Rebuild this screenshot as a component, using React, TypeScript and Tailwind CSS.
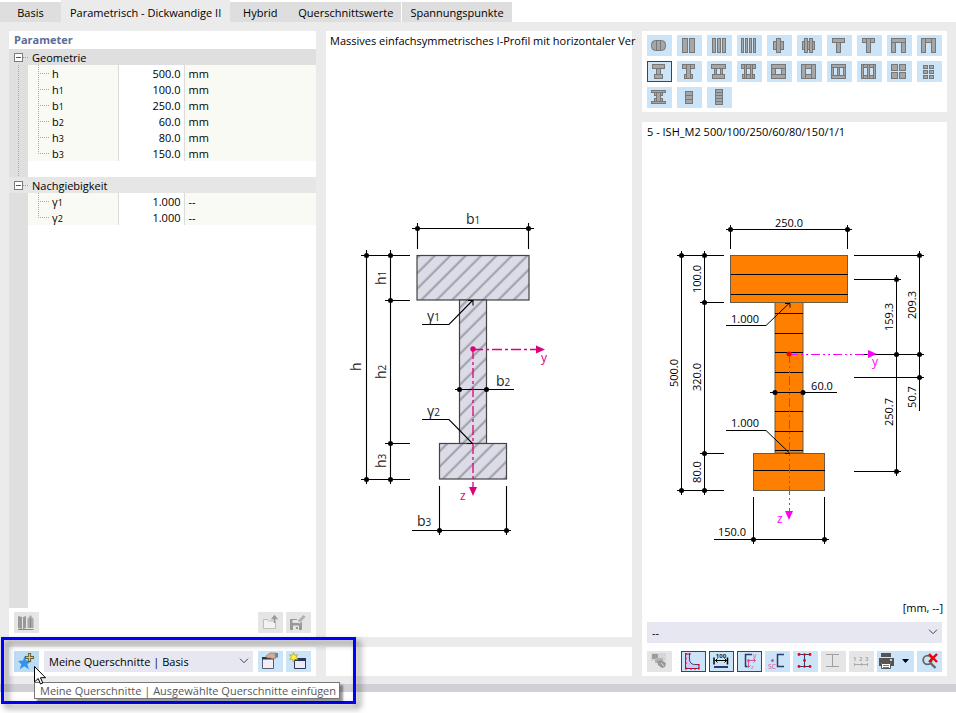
import { useState } from "react";
import type { ReactNode } from "react";
import clsx from "clsx";

type Box = [number, number, number, number];
type Param = { name: string; sub?: string; value: string; unit: string };

const tabs = ["Basis", "Parametrisch - Dickwandige II", "Hybrid", "Querschnittswerte", "Spannungspunkte"];

const groups: { title: string; tone: string; rows: Param[] }[] = [
  {
    title: "Geometrie",
    tone: "bg-[#dfdfdf]",
    rows: [
      { name: "h", value: "500.0", unit: "mm" },
      { name: "h", sub: "1", value: "100.0", unit: "mm" },
      { name: "b", sub: "1", value: "250.0", unit: "mm" },
      { name: "b", sub: "2", value: "60.0", unit: "mm" },
      { name: "h", sub: "3", value: "80.0", unit: "mm" },
      { name: "b", sub: "3", value: "150.0", unit: "mm" },
    ],
  },
  {
    title: "Nachgiebigkeit",
    tone: "bg-[#e6e6e6]",
    rows: [
      { name: "γ", sub: "1", value: "1.000", unit: "--" },
      { name: "γ", sub: "2", value: "1.000", unit: "--" },
    ],
  },
];

// Section pictograms as boxes: x, y, width, height (later boxes lie on top)
const shapes: { label: string; boxes: Box[] }[] = [
  { label: "Rundprofil", boxes: [] },
  { label: "Zwei Lamellen", boxes: [[5, 3, 6, 15], [12, 3, 6, 15]] },
  { label: "Drei Lamellen", boxes: [[5, 3, 4, 15], [10, 3, 4, 15], [15, 3, 4, 15]] },
  { label: "Vier Lamellen", boxes: [[4, 3, 3, 15], [8, 3, 3, 15], [12, 3, 3, 15], [16, 3, 3, 15]] },
  { label: "Kreuzprofil", boxes: [[6, 6, 4, 9], [13, 6, 4, 9], [9, 3, 5, 15]] },
  { label: "Doppelkreuz", boxes: [[5, 6, 13, 9], [7, 3, 4, 15], [12, 3, 4, 15]] },
  { label: "T-Profil", boxes: [[9, 7, 5, 11], [5, 3, 13, 5]] },
  { label: "T-Profil mit Steg", boxes: [[5, 3, 13, 5], [9, 3, 5, 15]] },
  { label: "U-Profil", boxes: [[4, 7, 5, 11], [14, 7, 5, 11], [4, 3, 15, 5]] },
  { label: "U-Profil mit Stegen", boxes: [[8, 3, 7, 5], [4, 3, 5, 15], [14, 3, 5, 15]] },
  { label: "I-Profil horizontal", boxes: [[9, 7, 5, 7], [5, 3, 13, 5], [7, 13, 9, 5]] },
  { label: "I-Profil vertikal", boxes: [[5, 3, 13, 5], [7, 13, 9, 5], [9, 3, 5, 15]] },
  { label: "Doppelsteg", boxes: [[7, 7, 3, 7], [13, 7, 3, 7], [4, 3, 15, 5], [5, 13, 13, 5]] },
  { label: "Doppelsteg vertikal", boxes: [[4, 3, 15, 5], [5, 13, 13, 5], [7, 3, 3, 15], [13, 3, 3, 15]] },
  { label: "Kasten horizontal", boxes: [[4, 7, 5, 7], [14, 7, 5, 7], [4, 3, 15, 5], [4, 13, 15, 5]] },
  { label: "Kasten vertikal", boxes: [[8, 3, 7, 5], [8, 13, 7, 5], [4, 3, 5, 15], [14, 3, 5, 15]] },
  { label: "Zweizelliger Kasten", boxes: [[4, 5, 3, 11], [10, 5, 3, 11], [16, 5, 3, 11], [4, 3, 15, 4], [4, 14, 15, 4]] },
  { label: "Zweizelliger Kasten vertikal", boxes: [[5, 3, 13, 4], [5, 14, 13, 4], [4, 3, 3, 15], [10, 3, 3, 15], [16, 3, 3, 15]] },
  { label: "Vier Teile", boxes: [[4, 3, 7, 7], [12, 3, 7, 7], [4, 11, 7, 7], [12, 11, 7, 7]] },
  { label: "Sechs Teile", boxes: [[6, 4, 5, 4], [12, 4, 5, 4], [6, 9, 5, 4], [12, 9, 5, 4], [6, 14, 5, 4], [12, 14, 5, 4]] },
  { label: "I-Profil mit Platten", boxes: [[4, 3, 15, 3], [4, 14, 15, 3], [7, 5, 9, 4], [7, 11, 9, 4], [9, 5, 5, 10]] },
  { label: "Drei Lagen", boxes: [[8, 4, 8, 5], [8, 8, 8, 5], [8, 12, 8, 5]] },
  { label: "Fünf Lagen", boxes: [[8, 2, 8, 4], [8, 5, 8, 4], [8, 8, 8, 4], [8, 11, 8, 4], [8, 14, 8, 4]] },
];

const ShapeIcon = ({ boxes }: { boxes: Box[] }) => (
  <svg viewBox="0 0 25 21" className="h-[21px] w-[25px]" fill="#a6a6a6" stroke="#777777">
    {boxes.length === 0 && (
      <>
        <rect x="4.5" y="5.5" width="14" height="10" rx="4" />
        <path d="M9.5 5.5v10M13.5 5.5v10" />
      </>
    )}
    {boxes.map(([x, y, w, h], i) => (
      <rect key={i} x={x + 0.5} y={y + 0.5} width={w - 1} height={h - 1} />
    ))}
  </svg>
);

type ToolButtonProps = {
  label: string;
  variant?: "normal" | "active" | "disabled" | "hover";
  wide?: boolean;
  children: ReactNode;
};

const ToolButton = ({ label, variant = "normal", wide, children }: ToolButtonProps) => (
  <button
    type="button"
    aria-label={label}
    disabled={variant === "disabled"}
    className={clsx(
      "h-[21px] shrink-0",
      wide ? "w-[37px]" : "w-[25px]",
      variant === "normal" && "bg-[#cce4f7]",
      variant === "active" && "bg-[#cce4f7] outline-1 -outline-offset-1 outline-[#00559b]",
      variant === "disabled" && "bg-[#e5e5e5]",
      variant === "hover" && "bg-[#bcdcf4]"
    )}
  >
    <svg viewBox={wide ? "0 0 37 21" : "0 0 25 21"} className="h-[21px] w-full" fill="none">
      {children}
    </svg>
  </button>
);

const Dropdown = ({ label, value }: { label: string; value: string }) => (
  <div className="relative h-[21px] min-w-0 flex-1">
    <select aria-label={label} className="block h-full w-full appearance-none bg-[#e7e7f2] px-[5px] pr-5 leading-4">
      <option>{value}</option>
    </select>
    <svg viewBox="0 0 10 6" className="pointer-events-none absolute top-[7px] right-1 h-1.5 w-2.5" fill="none" stroke="#444">
      <path d="M1 .7l4 4 4-4" />
    </svg>
  </div>
);

const Toggle = ({ open, label, onClick }: { open: boolean; label: string; onClick: () => void }) => (
  <button type="button" aria-label={label} aria-expanded={open} onClick={onClick} className="block h-4 w-full">
    <svg viewBox="0 0 19 16" className="h-4 w-full">
      <path d="M14 8.5h5" stroke="#999" strokeDasharray="1 1" />
      <rect x="5.5" y="4.5" width="8" height="8" fill="#fff" stroke="#7a7a7a" />
      <path d={open ? "M7 8.5h5" : "M7 8.5h5M9.5 6v5"} stroke="#555" />
    </svg>
  </button>
);

const Trunk = () => (
  <svg viewBox="0 0 19 16" className="block h-4 w-full" stroke="#aaa" strokeDasharray="1 1">
    <path d="M9.5 0v16" />
  </svg>
);

const ParameterTable = () => {
  const [closed, setClosed] = useState<string[]>([]);
  const toggle = (title: string) =>
    setClosed((prev) => (prev.includes(title) ? prev.filter((t) => t !== title) : [...prev, title]));

  return (
    <table className="w-full table-fixed border-collapse leading-[14px]">
      <colgroup>
        <col className="w-[19px]" />
        <col className="w-[90px]" />
        <col className="w-[66px]" />
        <col />
      </colgroup>
      {groups.map((group, g) => (
        <tbody key={group.title}>
          <tr className={clsx("h-4", group.tone)}>
            <td className="p-0">
              <Toggle open={!closed.includes(group.title)} label={group.title} onClick={() => toggle(group.title)} />
            </td>
            <th colSpan={3} scope="rowgroup" className="p-0 pt-0.5 pl-1 text-left font-normal">
              {group.title}
            </th>
          </tr>
          {!closed.includes(group.title) &&
            group.rows.map((row, i) => (
              <tr key={i} className="h-4 bg-[#f9faf4]">
                <td className="bg-[#dfdfdf] p-0">{g === 0 && <Trunk />}</td>
                <th scope="row" className="p-0 text-left font-normal">
                  <span className="flex h-4 items-center gap-[3px] pl-2.5">
                    <svg viewBox="0 0 11 16" className="h-4 w-[11px]" stroke="#aaa" strokeDasharray="1 1">
                      <path d={i === group.rows.length - 1 ? "M.5 0v8" : "M.5 0v16"} />
                      <path d="M0 8.5h11" />
                    </svg>
                    <span className="pt-0.5">
                      {row.name}
                      {row.sub && <span className="text-[9px]">{row.sub}</span>}
                    </span>
                  </span>
                </th>
                <td className="border-x border-[#dcdcdc] bg-white p-0 pt-0.5 pr-[3px] text-right">{row.value}</td>
                <td className="p-0 pt-0.5 pl-1">{row.unit}</td>
              </tr>
            ))}
          {g === 0 && (
            <tr className="h-4">
              <td className="bg-[#dfdfdf] p-0">
                <Trunk />
              </td>
              <td colSpan={3} className="p-0" />
            </tr>
          )}
        </tbody>
      ))}
    </table>
  );
};

const Dots = ({ at }: { at: [number, number][] }) => (
  <g fill="#000">
    {at.map(([x, y]) => (
      <circle key={`${x}-${y}`} cx={x} cy={y} r="2.5" />
    ))}
  </g>
);

type LabelProps = { x: number; y: number; sub?: string; vertical?: boolean; children: ReactNode };

const SymbolLabel = ({ x, y, sub, vertical, children }: LabelProps) => (
  <text x={x} y={y} transform={vertical ? `rotate(-90 ${x} ${y})` : undefined}>
    {children}
    {sub && <tspan fontSize="10">{sub}</tspan>}
  </text>
);

const ValueLabel = ({ x, y, vertical, children }: LabelProps) => (
  <text x={x} y={y} textAnchor="middle" transform={vertical ? `rotate(-90 ${x} ${y})` : undefined}>
    {children}
  </text>
);

// Schematic section with symbolic dimensions
const SchemaDrawing = () => (
  <svg viewBox="326 51 306 586" className="min-h-0 w-full flex-1">
    <defs>
      <pattern id="hatch" width="10.9" height="10.9" patternUnits="userSpaceOnUse" patternTransform="rotate(45)">
        <rect width="10.9" height="10.9" fill="#dcdce6" />
        <path d="M8.6 0v10.9" stroke="#9c9cab" strokeWidth="2" />
      </pattern>
    </defs>
    <g fill="url(#hatch)" stroke="#444" strokeWidth="1.2">
      <rect x="417" y="255.5" width="112" height="44.5" />
      <rect x="459.5" y="300" width="27" height="143.5" />
      <rect x="439.5" y="443.5" width="67" height="35.5" />
    </g>
    <g stroke="#000" strokeWidth="1.1" fill="none">
      <path d="M412 228.5h122M417.5 223v26M528.5 223v26" />
      <path d="M366.5 250v234M390.5 250v234M361 255.5h49M385 300.5h25M385 443.5h25M361 479.5h49" />
      <path d="M455 389.5h59" />
      <path d="M412 530.5h99M439.5 486v49M506.5 486v49" />
      <path d="M422 324.5h27l23.5-24M468 300.5h5v5" />
      <path d="M422 419.5h27l23.5 24M467 443.5h6" />
    </g>
    <Dots
      at={[
        [417.5, 228.5], [528.5, 228.5], [366.5, 255.5], [390.5, 255.5], [390.5, 300.5], [390.5, 443.5],
        [366.5, 479.5], [390.5, 479.5], [459.5, 389.5], [486.5, 389.5], [439.5, 530.5], [506.5, 530.5],
      ]}
    />
    <g stroke="#e0007a" strokeWidth="1.3" strokeDasharray="10 3 3 3" fill="none">
      <path d="M473 349.5h64M473 349v139" />
    </g>
    <g fill="#e0007a" fontSize="12">
      <circle cx="473" cy="349" r="2.7" />
      <path d="M536 345.5v8l9-4zM469 487h8l-4 9z" />
      <text x="541" y="362">y</text>
      <text x="460" y="500">z</text>
    </g>
    <g fill="#222" fontSize="14">
      <SymbolLabel x={466} y={224} sub="1">b</SymbolLabel>
      <SymbolLabel x={496} y={386} sub="2">b</SymbolLabel>
      <SymbolLabel x={417} y={526} sub="3">b</SymbolLabel>
      <SymbolLabel x={427} y={321} sub="1">γ</SymbolLabel>
      <SymbolLabel x={427} y={416} sub="2">γ</SymbolLabel>
      <SymbolLabel x={361} y={371} vertical>h</SymbolLabel>
      <SymbolLabel x={386} y={285} sub="1" vertical>h</SymbolLabel>
      <SymbolLabel x={386} y={379} sub="2" vertical>h</SymbolLabel>
      <SymbolLabel x={386} y={468} sub="3" vertical>h</SymbolLabel>
    </g>
  </svg>
);

// Section to scale with the actual values
const SectionDrawing = () => (
  <svg viewBox="642 142 305 458" className="min-h-0 w-full flex-1">
    <g fill="#ff8000" stroke="#6b5a45">
      <rect x="730.5" y="255.5" width="117" height="47" />
      <rect x="775" y="302.5" width="28" height="150.5" />
      <rect x="753.5" y="453.5" width="71" height="37" />
    </g>
    <g stroke="#000" fill="none">
      <path d="M731 274.5h117M731 294.5h117M754 470.5h71" />
      <path d="M775 313.5h28M775 333.5h28M775 352.5h28M775 372.5h28M775 411.5h28M775 431.5h28M775 450.5h28" />
      <path d="M726 229.5h126M730.5 225v24M847.5 225v24" />
      <path d="M681.5 251v244M704.5 251v244M677 255.5h47M700 302.5h24M700 453.5h24M677 490.5h47" />
      <path d="M896.5 275v201M919.5 251v160M854 255.5h70M854 279.5h47M860 354.5h64M854 377.5h70M854 471.5h47" />
      <path d="M770 392.5h67M714 539.5h115M753.5 497v47M824.5 497v47" />
      <path d="M726 325.5h40l23.5-22.5M785 303.5h5v4" />
      <path d="M726 430.5h40l23.5 22.5M785 453.5h5" />
    </g>
    <Dots
      at={[
        [730.5, 229.5], [847.5, 229.5], [681.5, 255.5], [704.5, 255.5], [704.5, 302.5], [704.5, 453.5],
        [681.5, 490.5], [704.5, 490.5], [896.5, 279.5], [896.5, 354.5], [896.5, 471.5], [919.5, 255.5],
        [919.5, 354.5], [919.5, 377.5], [775, 392.5], [803, 392.5], [753.5, 539.5], [824.5, 539.5],
      ]}
    />
    <g stroke="#ff00ff" strokeDasharray="9 3 2 3 2 3" fill="none">
      <path d="M789 354.5h79M789.5 354v157" />
    </g>
    <circle cx="789" cy="354" r="2.5" fill="#ff0000" />
    <g fill="#ff00ff" fontSize="12">
      <path d="M868 350v8l9-4zM785 511h8l-4 9z" />
      <text x="872" y="366">y</text>
      <text x="777" y="523">z</text>
    </g>
    <g fill="#000">
      <ValueLabel x={789} y={227}>250.0</ValueLabel>
      <ValueLabel x={745} y={323}>1.000</ValueLabel>
      <ValueLabel x={745} y={427}>1.000</ValueLabel>
      <ValueLabel x={822} y={390}>60.0</ValueLabel>
      <ValueLabel x={732} y={536}>150.0</ValueLabel>
      <ValueLabel x={678} y={373} vertical>500.0</ValueLabel>
      <ValueLabel x={701} y={279} vertical>100.0</ValueLabel>
      <ValueLabel x={701} y={377} vertical>320.0</ValueLabel>
      <ValueLabel x={701} y={472} vertical>80.0</ValueLabel>
      <ValueLabel x={893} y={317} vertical>159.3</ValueLabel>
      <ValueLabel x={916} y={305} vertical>209.3</ValueLabel>
      <ValueLabel x={893} y={412} vertical>250.7</ValueLabel>
      <ValueLabel x={916} y={397} vertical>50.7</ValueLabel>
    </g>
  </svg>
);

const ViewToolbar = () => (
  <div className="flex gap-[3px]">
    <div className="mr-1.5 flex">
      <ToolButton label="Rendering" variant="disabled">
        <path d="M4 2h15v8H4z" fill="#d6d6d6" />
        <path d="M5 3h6v5H5z" fill="#9c9c9c" />
        <path d="M8 7h8v5H8z" fill="#b4b4b4" />
        <path d="M10 10l4-1 5 3-1 4-3 1-4-3z" fill="#999" />
        <path d="M14 12l3 3" stroke="#ddd" />
      </ToolButton>
    </div>
    <ToolButton label="Umriss" variant="active">
      <path d="M4.5 3h4v5c0 3.5 2 5.5 5 5.5H18v4H4.500z" fill="#ccc8f8" stroke="#4a3a7a" />
      <path
        d="M4 2h1.500v2H4zM8 2h1.500v2H8zM4 6.500h1.500v2H4zM4 11h1.500v2H4zM4 16.500h2v2H4zM9 17h2v1.500H9zM13 17h2v1.500h-2zM17 16.500h1.500v2H17zM17 13h1.500v1.500H17z"
        fill="#f00000"
      />
    </ToolButton>
    <ToolButton label="Bemaßung" variant="active">
      <text x="12" y="7" textAnchor="middle" fontSize="6" fontWeight="bold" fill="#222">100</text>
      <path d="M5 6.5v7M18.5 6.5v7" stroke="#000" strokeWidth="1.5" />
      <path d="M6 9.5h12M8.5 7.5l-2 2 2 2M15.5 7.5l2 2-2 2" stroke="#000" />
      <path d="M5 15h14v2H5z" fill="#2b3a6b" />
    </ToolButton>
    <ToolButton label="Hauptachsen" variant="active">
      <path d="M15 3.5H8.5v12H11" stroke="#2b3a6b" strokeWidth="1.5" />
      <path d="M11.5 9.5h7M11.5 9.5v7M16.5 7.5l2 2-2 2M9.5 14.5l2 2 2-2" stroke="#d9559a" />
      <circle cx="11.5" cy="9.5" r="1.5" fill="#d9559a" />
      <text x="16" y="7" fontSize="7" fill="#d9559a">y</text>
      <text x="14" y="18" fontSize="6" fill="#d9559a">z</text>
    </ToolButton>
    <ToolButton label="Schubmittelpunkt">
      <path d="M19 3.5h-6.5v12H19" stroke="#2b3a6b" strokeWidth="1.5" />
      <circle cx="7.5" cy="9.5" r="1.5" fill="#d9559a" />
      <text x="3" y="18" fontSize="7" fill="#d9559a">SC</text>
    </ToolButton>
    <ToolButton label="Spannungspunkte">
      <path d="M5 3.5h13M5 15.5h13M11.5 3.5v12" stroke="#2b3a6b" />
      <g fill="#f00000">
        <circle cx="6" cy="3.5" r="1.4" />
        <circle cx="17" cy="3.5" r="1.4" />
        <circle cx="11.5" cy="3.5" r="1.2" />
        <circle cx="11.5" cy="9.5" r="1.4" />
        <circle cx="11.5" cy="15.5" r="1.2" />
        <circle cx="6" cy="15.5" r="1.4" />
        <circle cx="17" cy="15.5" r="1.4" />
      </g>
    </ToolButton>
    <ToolButton label="Mittellinien" variant="disabled">
      <path d="M5 3.5h13M5 15.5h13M11.5 3.5v12" stroke="#a0a0a0" />
    </ToolButton>
    <ToolButton label="Nummerierung" variant="disabled">
      <g fontSize="6" fontWeight="bold" fill="#aaa">
        <text x="4" y="10">1</text>
        <text x="10" y="10">2</text>
        <text x="16" y="10">3</text>
      </g>
      <path d="M5 13.5h14M5.5 12v3M12.5 12v3M18.5 12v3" stroke="#aaa" />
    </ToolButton>
    <ToolButton label="Drucken" wide>
      <path d="M4 2h10v4H4zM2 7h15v8h-3v-3H4v3H2z" fill="#555" />
      <path d="M4.5 12.5h9v5h-9z" fill="#fff" stroke="#555" />
      <path d="M6 14.5h6M6 16.5h6" stroke="#777" />
      <circle cx="14" cy="9" r="1" fill="#fff" />
      <path d="M25 8h7l-3.5 4z" fill="#000" />
    </ToolButton>
    <ToolButton label="Zoom zurücksetzen">
      <circle cx="10.5" cy="9" r="4.3" stroke="#666" strokeWidth="1.8" />
      <path d="M13.5 12l5 5" stroke="#666" strokeWidth="2.4" />
      <path d="M12 3l8 8M20 3l-8 8" stroke="#f00000" strokeWidth="2.4" />
    </ToolButton>
  </div>
);

const App = () => {
  const [activeTab, setActiveTab] = useState(1);
  const [activeShape, setActiveShape] = useState(10);

  return (
    <div className="flex min-h-screen flex-col overflow-hidden bg-white font-['Open_Sans','Noto_Sans',sans-serif] text-[11px] leading-4 text-black">
      <nav role="tablist" className="flex h-[22px] items-end">
        {tabs.map((tab, i) => (
          <button
            key={tab}
            type="button"
            role="tab"
            aria-selected={i === activeTab}
            onClick={() => setActiveTab(i)}
            className={clsx(
              "whitespace-nowrap",
              i === activeTab ? "h-[22px] bg-[#ebebeb] px-[9px] pt-1" : "h-5 bg-[#dedede] px-2 pt-0.5",
              i === 0 && "w-[61px]",
              i === 2 && "w-[60px]",
              i === 4 && "ml-px"
            )}
          >
            {tab}
          </button>
        ))}
      </nav>

      <main className="grid flex-1 grid-cols-[307fr_306fr_305fr] gap-2.5 bg-[#ebebeb] px-[9px] pt-[9px] pb-2">
        <section className="flex min-w-0 flex-col gap-2.5">
          <div className="flex flex-1 flex-col bg-white">
            <h2 className="h-[18px] px-[5px] leading-[18px] font-bold text-[#5b6c99]">Parameter</h2>
            <ParameterTable />
            <div className="w-[19px] flex-1 bg-[#dfdfdf]" />
            <div className="flex gap-[3px] px-[5px] py-1">
              <ToolButton label="Bibliothek" variant="disabled">
                <path d="M4 4l4 1v12l-4-1zM9 5l3-1v12l-3 1z" fill="#999" />
                <path d="M13.5 7l3-4 3 4v9h-6z" fill="#a8a8a8" />
                <path d="M4 17.5h15.5M16.5 7v9" stroke="#888" />
              </ToolButton>
              <div className="flex-1" />
              <ToolButton label="Öffnen" variant="disabled">
                <path d="M5.5 16.5v-9h4l1 1.5h7v7.5z" fill="#f2f2f2" stroke="#bdbdbd" />
                <path d="M16.5 11V5M14.5 6.5l2-2.5 2 2.5z" fill="#999" stroke="#999" strokeWidth="1.5" />
              </ToolButton>
              <ToolButton label="Speichern" variant="disabled">
                <path d="M4 7h12v11H4z" fill="#999" />
                <path d="M6.5 8h6v3h-6zM7 13.5h6V18H7z" fill="#e5e5e5" />
                <path d="M12 10l6-6" stroke="#e5e5e5" strokeWidth="5" />
                <path d="M13 9.5L18.5 4" stroke="#b0b0b0" strokeWidth="3" />
                <path d="M10 15h2v2h-2z" fill="#999" />
              </ToolButton>
            </div>
          </div>

          <div className="relative flex gap-[5px] bg-white px-[5px] py-1">
            <ToolButton label="Ausgewählte Querschnitte einfügen" variant="hover">
              <path d="M10.5 5l1.6 4.5 5.4.4-4.2 3.3 1.5 5-4.500-2.900-4.500 2.900 1.500-5L4 9.900l5-.4z" fill="#2f94ea" />
              <path d="M15.5 2v9M11 6.5h9" stroke="#6e6030" strokeWidth="3.2" />
              <path d="M15.5 3v7M12 6.5h7" stroke="#d9c878" strokeWidth="1.2" />
            </ToolButton>
            <Dropdown label="Meine Querschnitte" value="Meine Querschnitte | Basis" />
            <div className="flex gap-[3px]">
              <ToolButton label="Verwalten">
                <path d="M4.5 6.5h11v11h-11z" fill="#f2eef5" stroke="#5a5f6d" />
                <path d="M4 6h12v2.5H4z" fill="#2e3654" />
                <path d="M8 5l4-3h6v5l-3 1-3-1H9z" fill="#d8a98a" stroke="#8c6a55" strokeWidth=".6" />
                <path d="M17 2h3v4.5h-3z" fill="#5d89b5" />
              </ToolButton>
              <ToolButton label="Neu">
                <path d="M8.5 7.5h11v10h-11z" fill="#ecebf5" stroke="#2e3654" />
                <path d="M8 7h12v3H8z" fill="#26335c" />
                <path
                  d="M7.500 1.500l1.200 2.800 3-.6L10 6.200l2 2.300-3.200-.2L7.500 11l-1-2.800-3 .3 1.900-2.300-1.800-2.400 2.900.5z"
                  fill="#fff23d"
                  stroke="#a99d1c"
                  strokeWidth=".7"
                />
              </ToolButton>
            </div>

            {/* highlight frame, hover tooltip and mouse pointer */}
            <div className="pointer-events-none absolute -top-2.5 -right-10 left-0 z-10 -ml-2 h-[67px] border-[3px] border-[#0000fe] drop-shadow-[4px_4px_3px_rgba(0,0,0,0.5)]" />
            <div
              role="tooltip"
              className="absolute top-[35px] left-[25px] z-20 h-[17px] border border-[#767676] bg-white pr-[3px] pl-[5px] leading-[15px] whitespace-nowrap text-[#575757] shadow-[3px_3px_2px_rgba(0,0,0,0.4)]"
            >
              Meine Querschnitte | Ausgewählte Querschnitte einfügen
            </div>
            <svg viewBox="0 0 12 19" className="pointer-events-none absolute top-[19px] left-[25px] z-30 h-[19px] w-3">
              <path d="M.5.5V16l3.700-3.500L6.500 18l2.300-1-2.300-5.300h5z" fill="#fff" stroke="#000" />
            </svg>
          </div>
        </section>

        <section className="flex min-w-0 flex-col gap-2.5">
          <div className="flex flex-1 flex-col bg-white">
            <h2 className="h-5 pl-1 leading-5 whitespace-nowrap">
              Massives einfachsymmetrisches I-Profil mit horizontaler Ver
            </h2>
            <SchemaDrawing />
          </div>
          <div className="h-[29px] bg-white" />
        </section>

        <section className="flex min-w-0 flex-col gap-2.5">
          <div className="grid grid-cols-[repeat(10,25px)] justify-between gap-y-[5px] bg-white px-[5px] py-1">
            {shapes.map((shape, i) => (
              <button
                key={shape.label}
                type="button"
                aria-label={shape.label}
                aria-pressed={i === activeShape}
                onClick={() => setActiveShape(i)}
                className={clsx(
                  "h-[21px] w-[25px] bg-[#cce4f7]",
                  i === activeShape && "outline-1 -outline-offset-1 outline-[#00559b]"
                )}
              >
                <ShapeIcon boxes={shape.boxes} />
              </button>
            ))}
          </div>

          <div className="flex flex-1 flex-col bg-white pb-1">
            <h2 className="h-5 px-[5px] leading-5">5 - ISH_M2 500/100/250/60/80/150/1/1</h2>
            <SectionDrawing />
            <p className="mb-[5px] h-[17px] px-1 text-right">[mm, --]</p>
            <div className="flex flex-col gap-2 px-[5px]">
              <div className="flex">
                <Dropdown label="Ergebnis" value="--" />
              </div>
              <ViewToolbar />
            </div>
          </div>
        </section>
      </main>
      <footer className="mb-[21px] h-2 bg-[#d0d0d6]" />
    </div>
  );
};

export default App;
